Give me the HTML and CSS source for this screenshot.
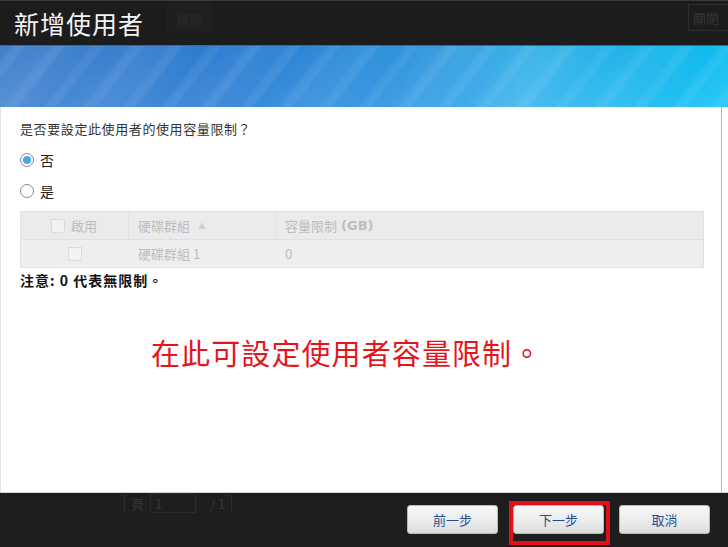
FILE: index.html
```html
<!DOCTYPE html>
<html lang="zh-Hant">
<head>
<meta charset="utf-8">
<title>新增使用者</title>
<link rel="stylesheet" href="styles.css">
</head>
<body>
<div class="dialog">
  <header class="header">
    <h1 class="title">新增使用者</h1>
    <span class="ghost-tab">移除</span>
    <span class="ghost-close">關閉</span>
  </header>
  <div class="banner"></div>
  <main class="content">
    <p class="question">是否要設定此使用者的使用容量限制？</p>
    <label class="radio-row"><span class="radio checked"></span><span>否</span></label>
    <label class="radio-row"><span class="radio"></span><span>是</span></label>
    <div class="grid">
      <div class="grid-row grid-head">
        <div class="cell c1"><span class="box"></span><span>啟用</span></div>
        <div class="cell c2">硬碟群組 <span class="sort">▲</span></div>
        <div class="cell c3">容量限制 <b>(GB)</b></div>
      </div>
      <div class="grid-row grid-body">
        <div class="cell c1 center"><span class="box"></span></div>
        <div class="cell c2">硬碟群組 1</div>
        <div class="cell c3">0</div>
      </div>
    </div>
    <p class="note">注意: 0 代表無限制。</p>
    <p class="callout">在此可設定使用者容量限制。</p>
  </main>
  <footer class="footer">
    <div class="ghost-pager">
      <span class="sep"></span><span>頁</span><span class="pinput">1</span><span>/ 1</span><span class="sep"></span>
    </div>
    <div class="buttons">
      <button class="btn">前一步</button>
      <button class="btn highlight">下一步</button>
      <button class="btn">取消</button>
    </div>
  </footer>
</div>
</body>
</html>
```

FILE: styles.css
```css
html, body {
  margin: 0;
  padding: 0;
  background: #ffffff;
}
body {
  width: 728px;
  height: 547px;
  overflow: hidden;
  font-family: "Noto Sans CJK TC", "Liberation Sans", sans-serif;
  font-size: 13px;
  color: #222;
}
.dialog {
  display: flex;
  flex-direction: column;
  width: 728px;
  height: 547px;
}
.header {
  height: 45px;
  box-sizing: border-box;
  background: #1c1c1c;
  border-top: 1px solid #3a3a3a;
  display: flex;
  align-items: center;
  position: relative;
}
.title {
  margin: 0 0 0 14px;
  font-size: 25px;
  font-weight: normal;
  color: #f4f4f4;
  line-height: 1;
  letter-spacing: 1px;
}
.ghost-tab {
  margin-left: 22px;
  width: 47px;
  height: 30px;
  background: #1f1f1f;
  color: #2b2b2b;
  font-size: 13px;
  display: flex;
  align-items: center;
  justify-content: center;
  align-self: flex-start;
  margin-top: 2px;
}
.ghost-close {
  position: absolute;
  right: -6px;
  top: 3px;
  width: 40px;
  height: 25px;
  border: 1px solid #2e2e2e;
  color: #353535;
  font-size: 13px;
  display: flex;
  align-items: center;
  padding-left: 4px;
}
.banner {
  height: 62px;
  border-top: 1px solid #1670c8;
  box-sizing: border-box;
  background:
    repeating-linear-gradient(128deg, rgba(255,255,255,0) 0px, rgba(255,255,255,0) 8px, rgba(255,255,255,0.06) 12px, rgba(255,255,255,0.07) 18px, rgba(255,255,255,0) 22px, rgba(255,255,255,0) 31px),
    repeating-linear-gradient(128deg, rgba(255,255,255,0) 0px, rgba(255,255,255,0.05) 40px, rgba(255,255,255,0) 80px),
    linear-gradient(180deg, rgba(0,0,0,0.03) 0%, rgba(255,255,255,0.06) 100%),
    linear-gradient(90deg, #4384d0 0%, #2d7fd6 30%, #2f96e2 55%, #3cb6ee 72%, #1ab8f0 88%, #10c2f6 100%);
}
.content {
  flex: 1;
  width: 722px;
  box-sizing: border-box;
  border-right: 1px solid #b8b8b8;
  border-left: 1px solid #e4e4e4;
  padding: 12px 0 0 19px;
}
.question {
  margin: 0 0 11px 0;
  line-height: 20px;
  color: #333;
  letter-spacing: 0.6px;
}
.radio-row {
  display: flex;
  align-items: center;
  gap: 6px;
  height: 20px;
  margin-bottom: 11px;
  font-size: 14px;
  color: #222;
}
.radio-row:last-of-type {
  margin-bottom: 10px;
}
.radio {
  width: 12px;
  height: 12px;
  border: 1px solid #8a8a8a;
  border-radius: 50%;
  background: #fff;
  display: flex;
  align-items: center;
  justify-content: center;
}
.radio.checked::after {
  content: "";
  width: 8px;
  height: 8px;
  border-radius: 50%;
  background: #4aa8e8;
}
.grid {
  width: 684px;
  background: #eeeeee;
  border: 1px solid #e2e2e2;
  box-sizing: border-box;
  color: #bdbdbd;
}
.grid-row {
  display: flex;
  height: 27px;
}
.grid-head {
  background: #ebebeb;
  border-bottom: 1px solid #e0e0e0;
}
.cell {
  display: flex;
  align-items: center;
  box-sizing: border-box;
  padding-left: 9px;
}
.c1 {
  width: 108px;
  padding-left: 30px;
  gap: 6px;
}
.c1.center {
  justify-content: center;
  padding-left: 0;
}
.c2 {
  width: 147px;
  gap: 4px;
}
.grid-head .c1, .grid-head .c2 {
  border-right: 1px solid #e2e2e2;
}
.c3 {
  flex: 1;
  gap: 4px;
}
.c3 b {
  font-family: "DejaVu Sans", sans-serif;
  font-weight: bold;
  font-size: 13px;
}
.sort {
  font-size: 8px;
  color: #cfcfcf;
  margin-left: 4px;
}
.box {
  width: 14px;
  height: 14px;
  box-sizing: border-box;
  border: 1px solid #dcdcdc;
  background: #f2f2f2;
}
.note {
  margin: 2px 0 0 0;
  font-size: 14px;
  font-weight: bold;
  color: #111;
  line-height: 20px;
  letter-spacing: 1px;
}
.callout {
  margin: 45px 0 0 131px;
  font-size: 29px;
  letter-spacing: 1.1px;
  color: #e8141c;
  line-height: 34px;
}
.footer {
  height: 55px;
  box-sizing: border-box;
  background: #1e1e1e;
  border-top: 1px solid #d0d0d0;
  display: flex;
  justify-content: space-between;
  align-items: flex-start;
  position: relative;
}
.ghost-pager {
  display: flex;
  align-items: center;
  gap: 6px;
  margin-left: 124px;
  height: 20px;
  color: #363636;
  font-size: 13px;
}
.ghost-pager .sep {
  width: 1px;
  height: 18px;
  background: #2a2a2a;
}
.ghost-pager .pinput {
  width: 40px;
  height: 18px;
  border: 1px solid #2a2a2a;
  padding-left: 4px;
  margin-right: 8px;
}
.buttons {
  display: flex;
  gap: 15px;
  margin: 12px 18px 0 0;
}
.btn {
  width: 91px;
  height: 29px;
  border: 1px solid #b9b9b9;
  border-radius: 3px;
  background: linear-gradient(180deg, #f7f7f7 0%, #ececec 55%, #dcdcdc 100%);
  color: #1f4f8f;
  font-family: "Noto Sans CJK TC", "Liberation Sans", sans-serif;
  font-size: 13px;
  padding: 0;
  position: relative;
}
.highlight::after {
  content: "";
  position: absolute;
  top: -5px;
  left: -5px;
  right: -7px;
  bottom: -12px;
  border: 4px solid #e0101a;
}
```
